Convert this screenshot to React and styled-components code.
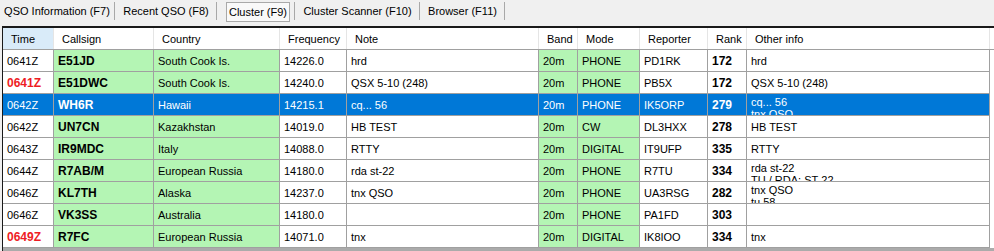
import React from 'react';
import styled, { createGlobalStyle } from 'styled-components';

const GlobalStyle = createGlobalStyle`
    html, body {
        margin: 0;
        padding: 0;
        background: #f0f0f0;
    }
    body {
        font-family: "Liberation Sans", Arial, sans-serif;
        font-size: 11px;
        color: #000;
        overflow: hidden;
    }
`;

const tabs = [
    { label: 'QSO Information (F7)', width: 114 },
    { label: 'Recent QSO (F8)', width: 100 },
    { label: 'Cluster (F9)', width: 64, active: true },
    { label: 'Cluster Scanner (F10)', width: 123 },
    { label: 'Browser (F11)', width: 83 },
];

const columns = [
    { title: 'Time', width: 51, sorted: true },
    { title: 'Callsign', width: 100 },
    { title: 'Country', width: 126 },
    { title: 'Frequency', width: 67 },
    { title: 'Note', width: 192 },
    { title: 'Band', width: 39 },
    { title: 'Mode', width: 62 },
    { title: 'Reporter', width: 68 },
    { title: 'Rank', width: 39 },
    { title: 'Other info', width: 243 },
];

const spots = [
    { time: '0641Z', call: 'E51JD', country: 'South Cook Is.', freq: '14226.0', note: 'hrd', mode: 'PHONE', reporter: 'PD1RK', rank: '172', info: 'hrd' },
    { time: '0641Z', late: true, call: 'E51DWC', country: 'South Cook Is.', freq: '14240.0', note: 'QSX 5-10 (248)', mode: 'PHONE', reporter: 'PB5X', rank: '172', info: 'QSX 5-10 (248)' },
    { time: '0642Z', call: 'WH6R', country: 'Hawaii', freq: '14215.1', note: 'cq... 56', mode: 'PHONE', reporter: 'IK5ORP', rank: '279', info: 'cq... 56\ntnx QSO', selected: true },
    { time: '0642Z', call: 'UN7CN', country: 'Kazakhstan', freq: '14019.0', note: 'HB TEST', mode: 'CW', reporter: 'DL3HXX', rank: '278', info: 'HB TEST' },
    { time: '0643Z', call: 'IR9MDC', country: 'Italy', freq: '14088.0', note: 'RTTY', mode: 'DIGITAL', reporter: 'IT9UFP', rank: '335', info: 'RTTY' },
    { time: '0644Z', call: 'R7AB/M', country: 'European Russia', freq: '14180.0', note: 'rda st-22', mode: 'PHONE', reporter: 'R7TU', rank: '334', info: 'rda st-22\nTU / RDA: ST-22' },
    { time: '0646Z', call: 'KL7TH', country: 'Alaska', freq: '14237.0', note: 'tnx QSO', mode: 'PHONE', reporter: 'UA3RSG', rank: '282', info: 'tnx QSO\ntu 58' },
    { time: '0646Z', call: 'VK3SS', country: 'Australia', freq: '14180.0', note: '', mode: 'PHONE', reporter: 'PA1FD', rank: '303', info: '' },
    { time: '0649Z', late: true, call: 'R7FC', country: 'European Russia', freq: '14071.0', note: 'tnx', mode: 'DIGITAL', reporter: 'IK8IOO', rank: '334', info: 'tnx' },
];

const gridTemplate = columns.map(c => `${c.width}px`).join(' ') + ' 1fr';

const App = () => {
    return (
        <Window>
            <GlobalStyle />
            <TabBar>
                {tabs.map((tab, index) => (
                    <React.Fragment key={index}>
                        <Tab $width={tab.width} $active={tab.active}>{tab.label}</Tab>
                        <TabDivider />
                    </React.Fragment>
                ))}
            </TabBar>
            <GridFrame>
                <HeaderRow>
                    {columns.map((col, index) => (
                        <HeaderCell key={index} $sorted={col.sorted}>{col.title}</HeaderCell>
                    ))}
                    <Filler />
                </HeaderRow>
                {spots.map((spot, index) => (
                    <Row key={index} $selected={spot.selected}>
                        <Cell $bold={spot.late} $red={spot.late && !spot.selected}>{spot.time}</Cell>
                        <Cell $green $bold>{spot.call}</Cell>
                        <Cell $green>{spot.country}</Cell>
                        <Cell>{spot.freq}</Cell>
                        <Cell>{spot.note}</Cell>
                        <Cell $green>20m</Cell>
                        <Cell $green>{spot.mode}</Cell>
                        <Cell>{spot.reporter}</Cell>
                        <Cell $bold>{spot.rank}</Cell>
                        <InfoCell $multi={spot.info.includes('\n')}>{spot.info}</InfoCell>
                        <Filler />
                    </Row>
                ))}
            </GridFrame>
        </Window>
    );
};

const Window = styled.div`
    width: 994px;
    height: 251px;
    overflow: hidden;
    background: #f0f0f0;
`;

const TabBar = styled.div`
    display: flex;
    align-items: flex-start;
    height: 26px;
`;

const Tab = styled.div`
    box-sizing: border-box;
    width: ${p => p.$width}px;
    height: ${p => (p.$active ? '20px' : '22px')};
    margin: ${p => (p.$active ? '2px 4px 0 8px' : '0')};
    border: ${p => (p.$active ? '1px solid #a9a9a9' : 'none')};
    background: ${p => (p.$active ? '#f9f9f9' : 'transparent')};
    display: flex;
    align-items: center;
    justify-content: center;
    white-space: nowrap;
    font-size: 11px;
    color: #000;
`;

const TabDivider = styled.div`
    width: 1px;
    height: 18px;
    margin: 2px 1px 0 0;
    background: #a8a8a8;
`;

const GridFrame = styled.div`
    margin-left: 2px;
    height: 225px;
    border-top: 2px solid #1a1a1a;
    border-left: 1px solid #1a1a1a;
    background: #ababab;
    overflow: hidden;
`;

const HeaderRow = styled.div`
    display: grid;
    grid-template-columns: ${gridTemplate};
    height: 22px;
    background: #fff;
    border-bottom: 1px solid #a0a0a0;
    box-sizing: border-box;
`;

const HeaderCell = styled.div`
    display: flex;
    align-items: center;
    padding-left: 8px;
    border-right: 1px solid #e5e5e5;
    background: ${p => (p.$sorted ? '#d9ebf9' : '#fff')};
    white-space: nowrap;
    overflow: hidden;
`;

const Row = styled.div`
    display: grid;
    grid-template-columns: ${gridTemplate};
    height: 22px;
    color: ${p => (p.$selected ? '#fff' : '#000')};
    --cell-bg: ${p => (p.$selected ? '#0078d7' : '#fff')};
    --green-bg: ${p => (p.$selected ? '#0078d7' : '#b4f5b4')};
`;

const Cell = styled.div`
    box-sizing: border-box;
    display: flex;
    align-items: center;
    padding: 0 4px;
    border-right: 1px solid #a0a0a0;
    border-bottom: 1px solid #a0a0a0;
    background: ${p => (p.$green ? 'var(--green-bg)' : 'var(--cell-bg)')};
    font-weight: ${p => (p.$bold ? 'bold' : 'normal')};
    font-size: ${p => (p.$bold ? '12px' : '11px')};
    color: ${p => (p.$red ? '#ee1c24' : 'inherit')};
    white-space: nowrap;
    overflow: hidden;
`;

const InfoCell = styled.div`
    box-sizing: border-box;
    display: ${p => (p.$multi ? 'block' : 'flex')};
    align-items: center;
    padding: ${p => (p.$multi ? '2px 4px 0' : '0 4px')};
    line-height: ${p => (p.$multi ? '12px' : 'normal')};
    white-space: pre-line;
    border-right: 1px solid #a0a0a0;
    border-bottom: 1px solid #a0a0a0;
    background: var(--cell-bg);
    overflow: hidden;
`;

const Filler = styled.div`
    background: #fff;
`;

export default App;
